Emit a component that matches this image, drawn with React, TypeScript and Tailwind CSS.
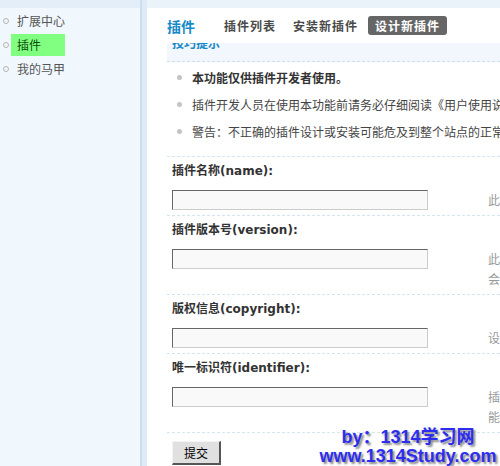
export default function App() {
  const rows = [
    { label: "插件名称(name):", desc: ["此插件的名称，请使用中文或英文，建议不超过40字"] },
    { label: "插件版本号(version):", desc: ["此插件的版本号，如 1.0.0", "会显示在插件列表中"] },
    { label: "版权信息(copyright):", desc: ["设置插件的版权信息"] },
    { label: "唯一标识符(identifier):", desc: ["插件的唯一标识符，不可与其他插件重复", "能使用字母、数字和下划线"] },
  ];
  return (
    <div className="relative flex h-[466px] w-[500px] overflow-hidden bg-white font-['Noto_Sans_CJK_SC',sans-serif] text-[12px] text-[#333]">
      {/* sidebar */}
      <div className="flex w-[140px] shrink-0 flex-col bg-[#f1f8fd]">
        <div className="h-[8px] bg-[#e4eef8]" />
        <ul className="pt-[1px]">
          {["扩展中心", "插件", "我的马甲"].map((t, i) => (
            <li key={t} className="flex h-[24px] items-center">
              <span className="ml-[3px] h-[6px] w-[6px] shrink-0 rounded-full border border-[#b5b5b5] bg-[#f4f4f4]" />
              {i === 1 ? (
                <span className="ml-[2px] flex h-[22px] w-[54px] items-center bg-[#80ff80] pl-[6px] text-[#0b4d0b]">{t}</span>
              ) : (
                <span className="ml-[2px] pl-[6px] text-[#555]">{t}</span>
              )}
            </li>
          ))}
        </ul>
      </div>
      {/* divider */}
      <div className="flex w-[7px] shrink-0">
        <div className="w-[2px] bg-[#cbdeee]" />
        <div className="flex-1 bg-[#dcebf6]" />
      </div>
      {/* main */}
      <div className="flex min-w-0 flex-1 flex-col">
        <div className="h-[8px] bg-[#ebf3fa]" />
        <div className="flex h-[35px] items-center whitespace-nowrap pl-[20px]">
          <span className="text-[14px] font-bold leading-none text-[#1589c8]">插件</span>
          <div className="ml-[22px] flex items-center gap-[3px]">
            <span className="h-[19px] px-[7px] text-[12px] font-bold leading-[19px] tracking-[1px] text-[#4a4a4a]">插件列表</span>
            <span className="h-[19px] px-[7px] text-[12px] font-bold leading-[19px] tracking-[1px] text-[#4a4a4a]">安装新插件</span>
            <span className="h-[19px] rounded-[3px] bg-[#666] px-[7px] text-[12px] font-bold leading-[19px] tracking-[1px] text-white">设计新插件</span>
          </div>
        </div>
        <div className="ml-[20px] flex flex-col">
          <div className="h-[19px] overflow-hidden border-b border-dashed border-[#cfdfea] bg-[#f1f7fd] pl-[5px]">
            <div className="mt-[-7px] text-[12px] font-bold leading-[14px] text-[#1589c8]">技巧提示</div>
          </div>
          <ul className="whitespace-nowrap pb-[11px] pt-[2px]">
            {[
              { t: "本功能仅供插件开发者使用。", b: true },
              { t: "插件开发人员在使用本功能前请务必仔细阅读《用户使用说明书》中的插件开发部分", b: false },
              { t: "警告：不正确的插件设计或安装可能危及到整个站点的正常使用", b: false },
            ].map((it) => (
              <li key={it.t} className="flex h-[27px] items-center leading-[27px]">
                <span className="ml-[10px] h-[5px] w-[5px] shrink-0 rounded-full bg-[#c4c4c4]" />
                <span className={"ml-[10px] shrink-0 " + (it.b ? "font-bold text-[#333]" : "text-[#444]")}>{it.t}</span>
              </li>
            ))}
          </ul>
          {rows.map((r) => (
            <div key={r.label} className="border-t border-dashed border-[#d6e6f0] pb-[5px]">
              <div className="whitespace-nowrap pb-[10px] pl-[5px] pt-[5px] font-['DejaVu_Sans','Noto_Sans_CJK_SC',sans-serif] text-[12px] font-bold leading-[18px] text-[#333]">
                {r.label}
              </div>
              <div className="flex">
                <div className="w-[321px] shrink-0 pl-[5px]">
                  <div className="h-[20px] w-[256px] border border-b-[#cccccc] border-l-[#666] border-r-[#cccccc] border-t-[#666] bg-[#f9f9f9]" />
                </div>
                <div className="shrink-0 whitespace-nowrap leading-[20px] text-[#999]">
                  {r.desc.map((d) => (
                    <div key={d}>{d}</div>
                  ))}
                </div>
              </div>
            </div>
          ))}
          <div className="border-t border-dashed border-[#d6e6f0] pl-[5px] pt-[8px]">
            <button className="flex h-[24px] w-[49px] items-center justify-center border border-b-2 border-r-2 border-b-[#555] border-l-[#f4f4f4] border-r-[#555] border-t-[#f4f4f4] bg-[#e0e0e0] text-[12px] text-black">
              提交
            </button>
          </div>
        </div>
      </div>
      {/* watermark */}
      <div className="absolute left-[318px] top-[428px] w-[180px] text-center font-['Liberation_Sans','Noto_Sans_CJK_SC',sans-serif] text-[18px] font-bold leading-[19px] text-[#2d2df0] [text-shadow:2px_2px_2px_#8a8a8a]">
        <div>by：1314学习网</div>
        <div>www.1314Study.com</div>
      </div>
    </div>
  );
}
